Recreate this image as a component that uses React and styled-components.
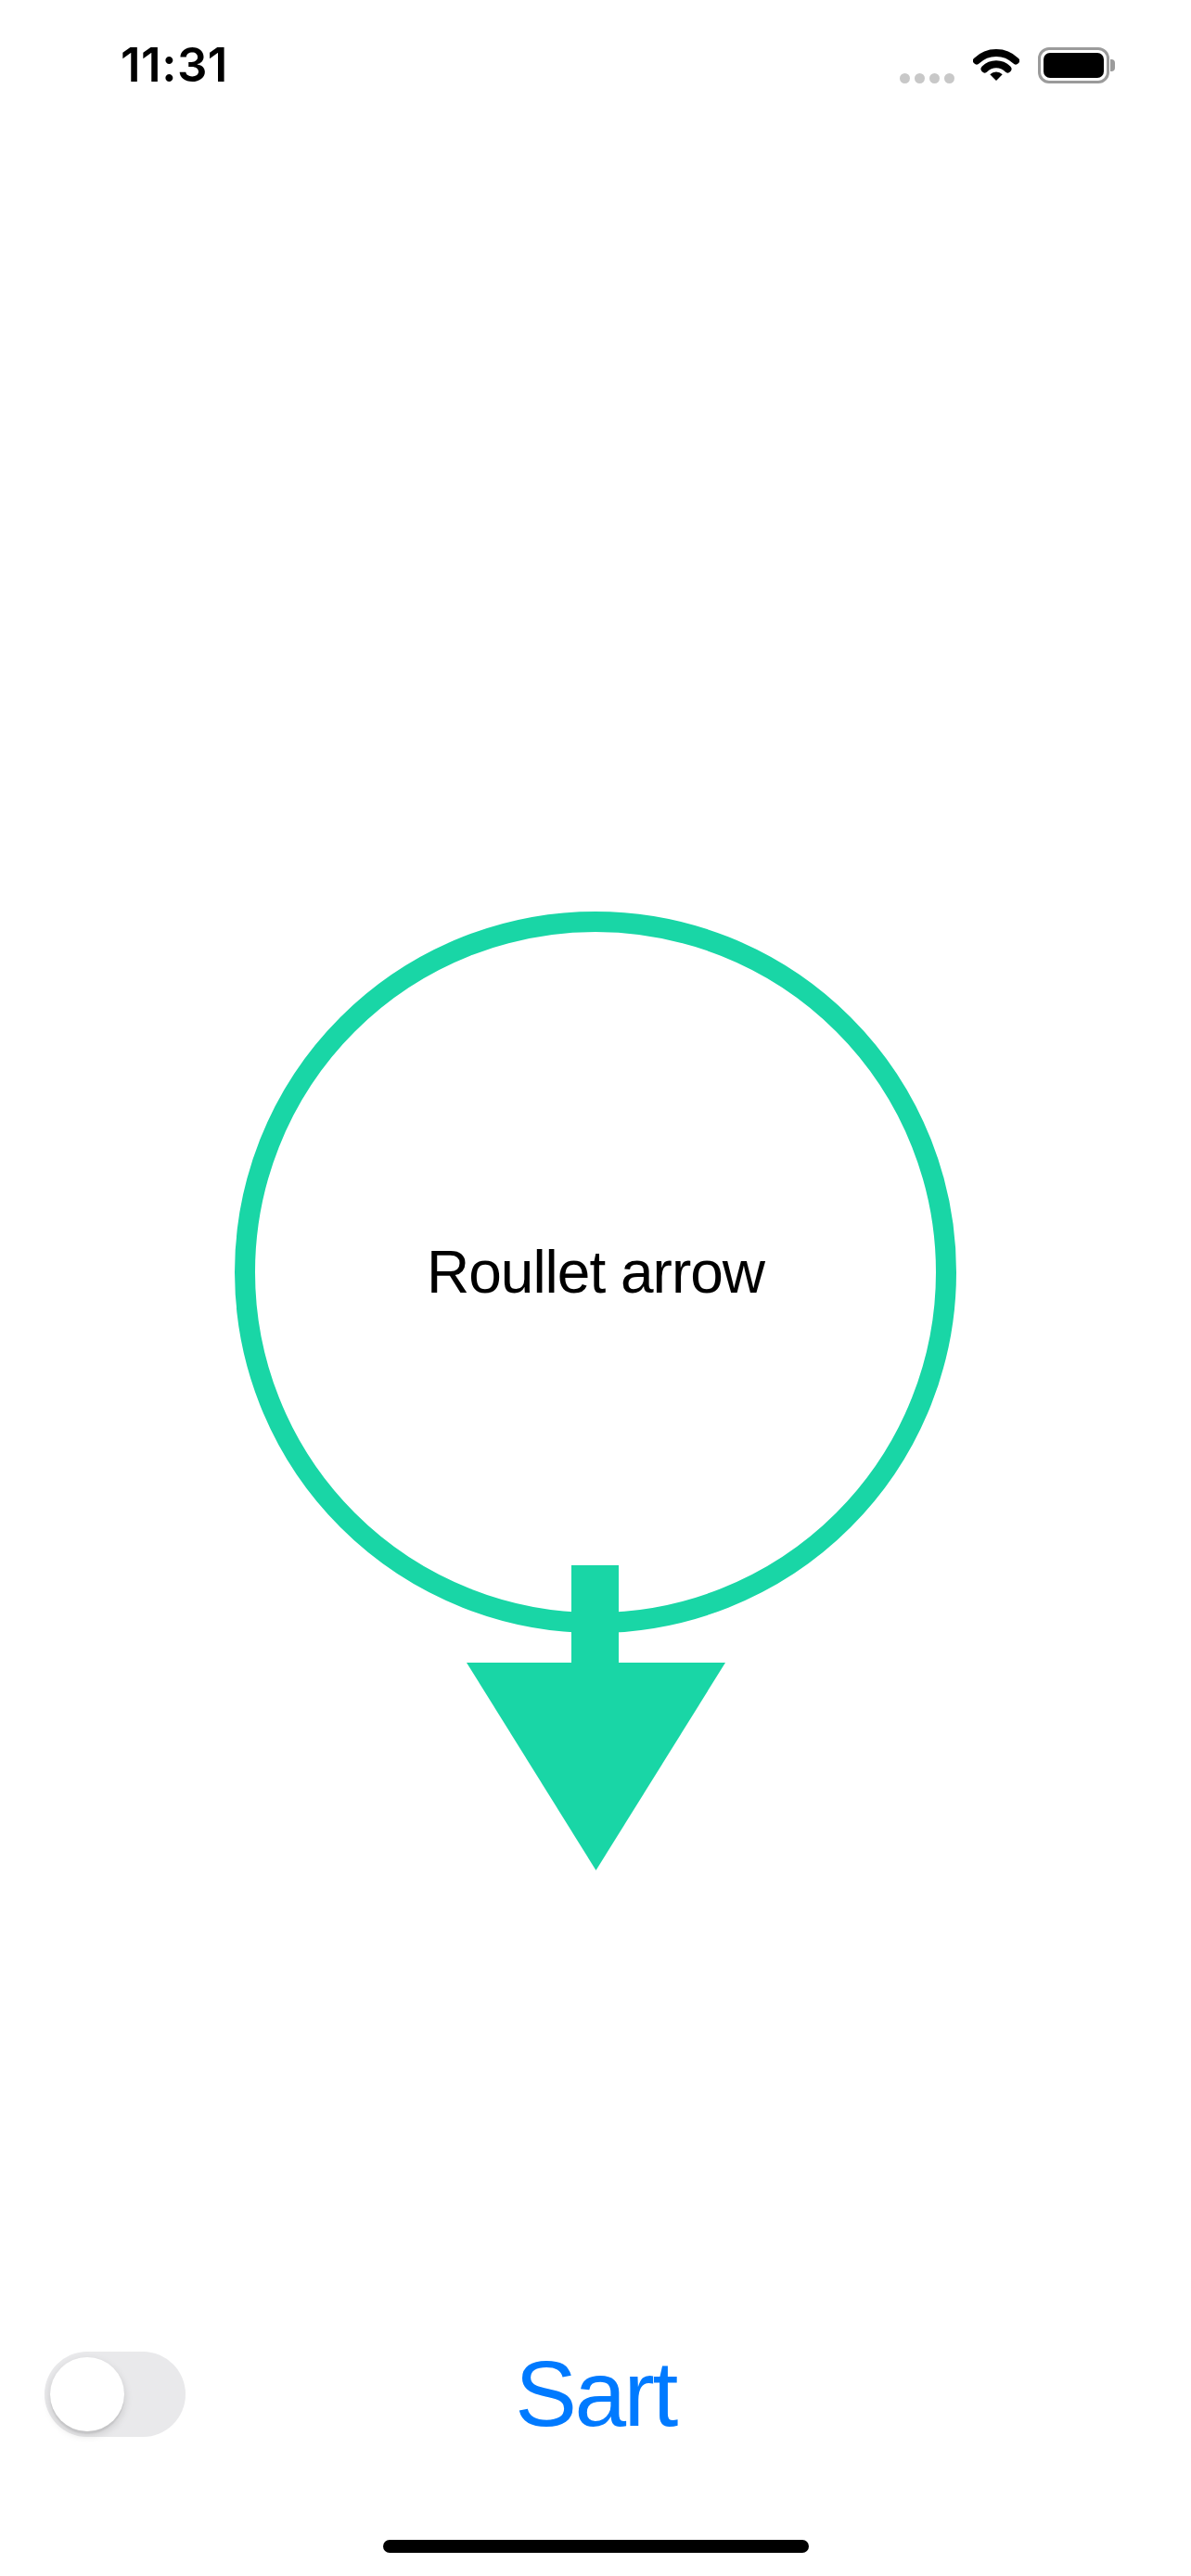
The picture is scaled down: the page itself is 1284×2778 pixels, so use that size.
import React, { useState } from 'react'
import styled, { createGlobalStyle } from 'styled-components'

const GlobalStyle = createGlobalStyle`
  html, body {
    margin: 0;
    padding: 0;
    background: #ffffff;
  }
  body {
    font-family: "Liberation Sans", Arial, sans-serif;
  }
`

const StyledPage = styled.div`
  width: 1284px;
  min-height: 2778px;
  display: flex;
  flex-direction: column;
  background: #ffffff;
  box-sizing: border-box;
`

const StyledStatusBar = styled.header`
  height: 140px;
  display: flex;
  align-items: center;
  justify-content: space-between;
  padding: 0 82px 0 130px;
  box-sizing: border-box;
`

const StyledTime = styled.span`
  font-family: Inter, "Liberation Sans", sans-serif;
  font-size: 51px;
  line-height: 52px;
  font-weight: 600;
  letter-spacing: 0.5px;
  color: #000;
`

const StyledStatusIcons = styled.div`
  display: flex;
  align-items: center;
  height: 39px;
  gap: 20px;
`

const StyledSignal = styled.div`
  display: flex;
  gap: 5px;
  align-self: flex-end;
`

const StyledDot = styled.span`
  width: 11px;
  height: 11px;
  border-radius: 50%;
  background: #c8c8c8;
`

const StyledBattery = styled.div`
  display: flex;
  align-items: center;
`

const StyledBatteryBody = styled.div`
  width: 77px;
  height: 39px;
  padding: 3px;
  box-sizing: border-box;
  border: 3px solid #9b9b9b;
  border-radius: 12px;
  display: flex;
`

const StyledBatteryFill = styled.div`
  flex: 1;
  background: #000;
  border-radius: 7px;
`

const StyledBatteryNub = styled.div`
  width: 5px;
  height: 13px;
  margin-left: 1px;
  background: #9b9b9b;
  border-radius: 0 4px 4px 0;
`

const StyledStage = styled.main`
  flex: 1;
  display: flex;
  flex-direction: column;
  align-items: center;
  padding-top: 843px;
  box-sizing: border-box;
`

const StyledRing = styled.div`
  width: 778px;
  height: 778px;
  box-sizing: border-box;
  border: 22px solid ${p => p.color};
  border-radius: 50%;
  display: flex;
  align-items: center;
  justify-content: center;
`

const StyledLabel = styled.span`
  font-size: 64px;
  line-height: 1;
  letter-spacing: -1px;
  color: #000;
`

const StyledPointer = styled.svg`
  display: block;
  margin-top: -73px;
`

const StyledControls = styled.section`
  height: 93px;
  display: grid;
  grid-template-columns: 1fr auto 1fr;
  align-items: center;
`

const StyledSwitch = styled.button`
  justify-self: start;
  margin-left: 48px;
  width: 152px;
  height: 92px;
  padding: 6px;
  box-sizing: border-box;
  border: none;
  border-radius: 46px;
  background: ${p => (p.on ? '#34c759' : '#e9e9eb')};
  display: flex;
  justify-content: ${p => (p.on ? 'flex-end' : 'flex-start')};
  align-items: center;
  cursor: pointer;
`

const StyledKnob = styled.span`
  width: 80px;
  height: 80px;
  border-radius: 50%;
  background: #ffffff;
  box-shadow: 0 4px 10px rgba(0, 0, 0, 0.15), 0 3px 1px rgba(0, 0, 0, 0.06);
`

const StyledStartButton = styled.button`
  border: none;
  background: transparent;
  padding: 0;
  font-family: "Liberation Sans", Arial, sans-serif;
  font-size: 100px;
  line-height: 93px;
  letter-spacing: -2.5px;
  color: #007aff;
  cursor: pointer;
`

const StyledHomeArea = styled.footer`
  display: flex;
  justify-content: center;
  padding: 111px 0 25px;
`

const StyledHomeIndicator = styled.div`
  width: 459px;
  height: 14px;
  border-radius: 7px;
  background: #000;
`

const ACCENT = '#19d6a6'

const WifiIcon = () => (
  <svg width="50" height="36" viewBox="0 0 50 36">
    <path d="M4 13.5 A30 30 0 0 1 46 13.5" fill="none" stroke="#000" strokeWidth="8" strokeLinecap="round" />
    <path d="M12.6 22.4 A17.5 17.5 0 0 1 37.4 22.4" fill="none" stroke="#000" strokeWidth="8" strokeLinecap="round" />
    <path d="M25 35 L18.3 28.3 A9.5 9.5 0 0 1 31.7 28.3 Z" fill="#000" />
  </svg>
)

const App = () => {
  const [on, setOn] = useState(false)

  return (
    <StyledPage>
      <GlobalStyle />
      <StyledStatusBar>
        <StyledTime>11:31</StyledTime>
        <StyledStatusIcons>
          <StyledSignal>
            {[0, 1, 2, 3].map(i => <StyledDot key={i} />)}
          </StyledSignal>
          <WifiIcon />
          <StyledBattery>
            <StyledBatteryBody>
              <StyledBatteryFill />
            </StyledBatteryBody>
            <StyledBatteryNub />
          </StyledBattery>
        </StyledStatusIcons>
      </StyledStatusBar>

      <StyledStage>
        <StyledRing color={ACCENT}>
          <StyledLabel>Roullet arrow</StyledLabel>
        </StyledRing>
        <StyledPointer width="279" height="329" viewBox="0 0 279 329">
          <rect x="113" y="0" width="51" height="106" fill={ACCENT} />
          <polygon points="0,105 279,105 139.5,329" fill={ACCENT} />
        </StyledPointer>
      </StyledStage>

      <StyledControls>
        <StyledSwitch on={on} onClick={() => setOn(!on)}>
          <StyledKnob />
        </StyledSwitch>
        <StyledStartButton type="button">Sart</StyledStartButton>
        <span />
      </StyledControls>

      <StyledHomeArea>
        <StyledHomeIndicator />
      </StyledHomeArea>
    </StyledPage>
  )
}

export default App
